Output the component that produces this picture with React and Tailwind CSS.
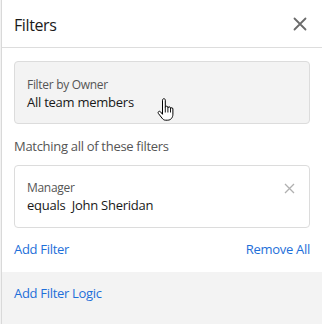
import React from "react";

function Hand() {
  return (
    <svg width="20" height="24" viewBox="0 0 20 24" className="absolute left-[141px] top-[36px]">
      <path
        d="M6.5 2.2c0-.9.6-1.5 1.4-1.5s1.4.6 1.4 1.5v7.3c0-.8.6-1.3 1.3-1.3s1.3.5 1.3 1.3v.6c0-.8.6-1.3 1.3-1.3s1.3.5 1.3 1.3v.8c0-.8.6-1.2 1.2-1.2.7 0 1.2.5 1.2 1.3v5.2c0 3.3-2 6-5.3 6H9.6c-1.6 0-2.6-.8-3.5-2L2.4 15.5c-.5-.8-.3-1.6.3-2 .7-.4 1.4-.2 1.9.4l1.9 2.4V2.2z"
        fill="#fff"
        stroke="#000"
        strokeWidth="1"
        strokeLinejoin="round"
      />
      <path d="M9.3 9.5v5M11.9 10.1v4.4M14.5 10.9v3.6" stroke="#000" strokeWidth="0.9" />
    </svg>
  );
}

export default function App() {
  return (
    <div className="flex h-[324px] w-[322px] bg-white font-['Open_Sans',sans-serif]">
      <div className="w-[1px] bg-[#f2f2f2]" />
      <div className="flex flex-1 flex-col border-l border-[#d9d9d9] bg-white">
        <div className="flex h-[48px] items-center justify-between border-b border-[#dddddd] pl-[12px] pr-[15px] pt-[3px]">
          <span className="text-[16px] text-[#1a1a1a] tracking-[-0.4px]">Filters</span>
          <svg width="14" height="14" viewBox="0 0 14 14" className="mb-[2px]">
            <path d="M1.5 1.5l11 11M12.5 1.5l-11 11" stroke="#6b6b6b" strokeWidth="1.8" strokeLinecap="round" />
          </svg>
        </div>
        <div className="flex flex-col px-[12px] pt-[13px]">
          <div className="relative flex h-[63px] flex-col justify-center rounded-[4px] border border-[#dcdcdc] bg-[#f3f3f3] px-[12px] pt-[2px]">
            <span className="text-[12px] leading-[17px] text-[#555] tracking-[-0.3px]">Filter by Owner</span>
            <span className="text-[13px] leading-[19px] text-[#181818] tracking-[-0.25px]">All team members</span>
            <Hand />
          </div>
          <div className="mt-[12px] text-[13px] leading-[20px] text-[#555] tracking-[-0.3px]">Matching all of these filters</div>
          <div className="mt-[9px] flex h-[63px] items-start justify-between rounded-[4px] border border-[#dcdcdc] bg-white pl-[12px] pr-[12px] pt-[13px]">
            <div className="flex flex-col">
              <span className="text-[12px] leading-[17px] text-[#555] tracking-[-0.3px]">Manager</span>
              <span className="text-[13px] leading-[19px] text-[#181818] tracking-[-0.25px]">
                equals&nbsp;&nbsp;John Sheridan
              </span>
            </div>
            <svg width="11" height="11" viewBox="0 0 11 11" className="mt-[4px] mr-[2px]">
              <path d="M1 1l9 9M10 1l-9 9" stroke="#b0b0b0" strokeWidth="1.3" />
            </svg>
          </div>
          <div className="mt-[11px] flex h-[22px] items-center justify-between text-[13px] text-[#1e6fd9] tracking-[-0.3px]">
            <span>Add Filter</span>
            <span>Remove All</span>
          </div>
        </div>
        <div className="mt-[11px] flex-1 bg-[#f3f3f3] px-[12px] pt-[8px]">
          <span className="text-[13px] leading-[20px] text-[#1e6fd9] tracking-[-0.3px]">Add Filter Logic</span>
        </div>
      </div>
    </div>
  );
}
